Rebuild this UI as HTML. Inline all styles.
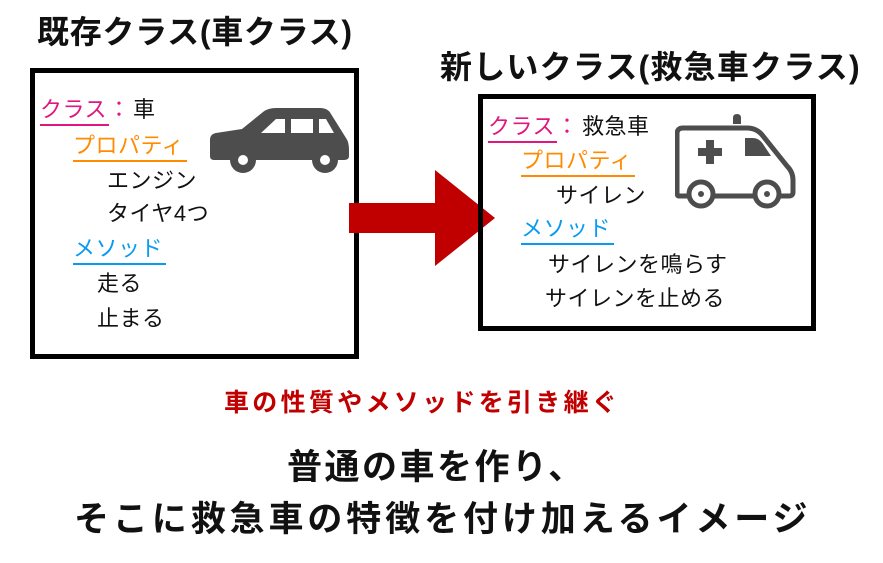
<!DOCTYPE html>
<html><head><meta charset="utf-8"><style>
body{margin:0;width:883px;height:563px;background:#fff;position:relative;overflow:hidden;font-family:"Liberation Sans","Noto Sans CJK JP",sans-serif;color:#111}
.a{position:absolute;white-space:nowrap;line-height:1}
.box{position:absolute;border:5px solid #000;box-sizing:border-box}
.t{font-size:22px;letter-spacing:0.5px}
.u{border-bottom:2.5px solid;padding-bottom:3px;padding-right:2px}
.pk{color:#e0177f}.or{color:#ff8c00}.bl{color:#0a9bf0}
</style></head><body>
<div class="a" style="left:37px;top:16px;font-size:32px;font-weight:bold;letter-spacing:0.7px">既存クラス(車クラス)</div>
<div class="a" style="left:440px;top:51px;font-size:32px;font-weight:bold;letter-spacing:1.2px">新しいクラス(救急車クラス)</div>

<div class="box" style="left:30px;top:68px;width:329px;height:291px"></div>
<div class="a t pk u" style="left:40px;top:99px">クラス</div>
<div class="a t pk" style="left:108px;top:99px">：</div>
<div class="a t" style="left:133px;top:99px">車</div>
<div class="a t or u" style="left:73px;top:135px;padding-right:3px">プロパティ</div>
<div class="a t" style="left:107px;top:170px">エンジン</div>
<div class="a t" style="left:107px;top:203px">タイヤ4つ</div>
<div class="a t bl u" style="left:73px;top:238px;padding-right:3px">メソッド</div>
<div class="a t" style="left:97px;top:273px">走る</div>
<div class="a t" style="left:97px;top:308px">止まる</div>
<svg class="a" style="left:208px;top:100px" width="143" height="74" viewBox="0 0 143 74">
<path d="M2 40 Q2 34 8 33 L34 29 L55 12 Q60 8 68 8 L112 8 Q120 8 123 14 L138 38 Q141 42 141 50 L141 56 Q141 60 136 60 L6 60 Q2 60 2 56 Z" fill="#4d4d4d"/>
<path d="M53 33 L68 19 L77 19 L77 33 Z M83 19 L105 19 L105 33 L83 33 Z M111 19 L118 19 L126 33 L111 33 Z" fill="#fff"/>
<circle cx="35" cy="60" r="13" fill="#4d4d4d"/><circle cx="35" cy="60" r="5" fill="#fff"/>
<circle cx="117" cy="60" r="13" fill="#4d4d4d"/><circle cx="117" cy="60" r="5" fill="#fff"/>
</svg>

<svg class="a" style="left:349px;top:168px" width="148" height="100"><path d="M0 35 H86 V2 L146 50 L86 98 V65 H0 Z" fill="#c00000"/></svg>

<div class="box" style="left:478px;top:94px;width:338px;height:237px"></div>
<div class="a t pk u" style="left:488px;top:116px">クラス</div>
<div class="a t pk" style="left:556px;top:116px">：</div>
<div class="a t" style="left:582px;top:116px">救急車</div>
<div class="a t or u" style="left:521px;top:150px;padding-right:3px">プロパティ</div>
<div class="a t" style="left:556px;top:185px">サイレン</div>
<div class="a t bl u" style="left:521px;top:218px;padding-right:3px">メソッド</div>
<div class="a t" style="left:548px;top:254px">サイレンを鳴らす</div>
<div class="a t" style="left:545px;top:288px">サイレンを止める</div>
<svg class="a" style="left:675px;top:114px" width="124" height="96" viewBox="0 0 124 96">
<path d="M58 4 Q58 0 62 0 Q66 0 66 4 L66 10 L58 10 Z" fill="#4d4d4d"/>
<path d="M8 14 L72 14 Q82 14 88 22 L112 52 Q118 58 118 66 L118 78 Q118 82 114 82 L4 82 Q2 82 2 78 L2 20 Q2 14 8 14 Z" fill="none" stroke="#4d4d4d" stroke-width="5"/>
<path d="M23 34 H31 V26 H39 V34 H47 V42 H39 V50 H31 V42 H23 Z" fill="#4d4d4d"/>
<path d="M70 24 L78 24 Q84 24 88 30 L96 42 L70 42 Z" fill="#4d4d4d"/>
<circle cx="26" cy="80" r="12" fill="#fff" stroke="#4d4d4d" stroke-width="5"/><circle cx="26" cy="80" r="3" fill="#4d4d4d"/>
<circle cx="92" cy="80" r="12" fill="#fff" stroke="#4d4d4d" stroke-width="5"/><circle cx="92" cy="80" r="3" fill="#4d4d4d"/>
</svg>

<div class="a" style="left:224px;top:391px;font-size:25px;font-weight:bold;color:#c00000;letter-spacing:3.3px">車の性質やメソッドを引き継ぐ</div>
<div class="a" style="left:287px;top:450px;font-size:35px;font-weight:bold;letter-spacing:2.5px">普通の車を作り、</div>
<div class="a" style="left:74px;top:502px;font-size:35px;font-weight:bold;letter-spacing:3.9px">そこに救急車の特徴を付け加えるイメージ</div>
</body></html>
